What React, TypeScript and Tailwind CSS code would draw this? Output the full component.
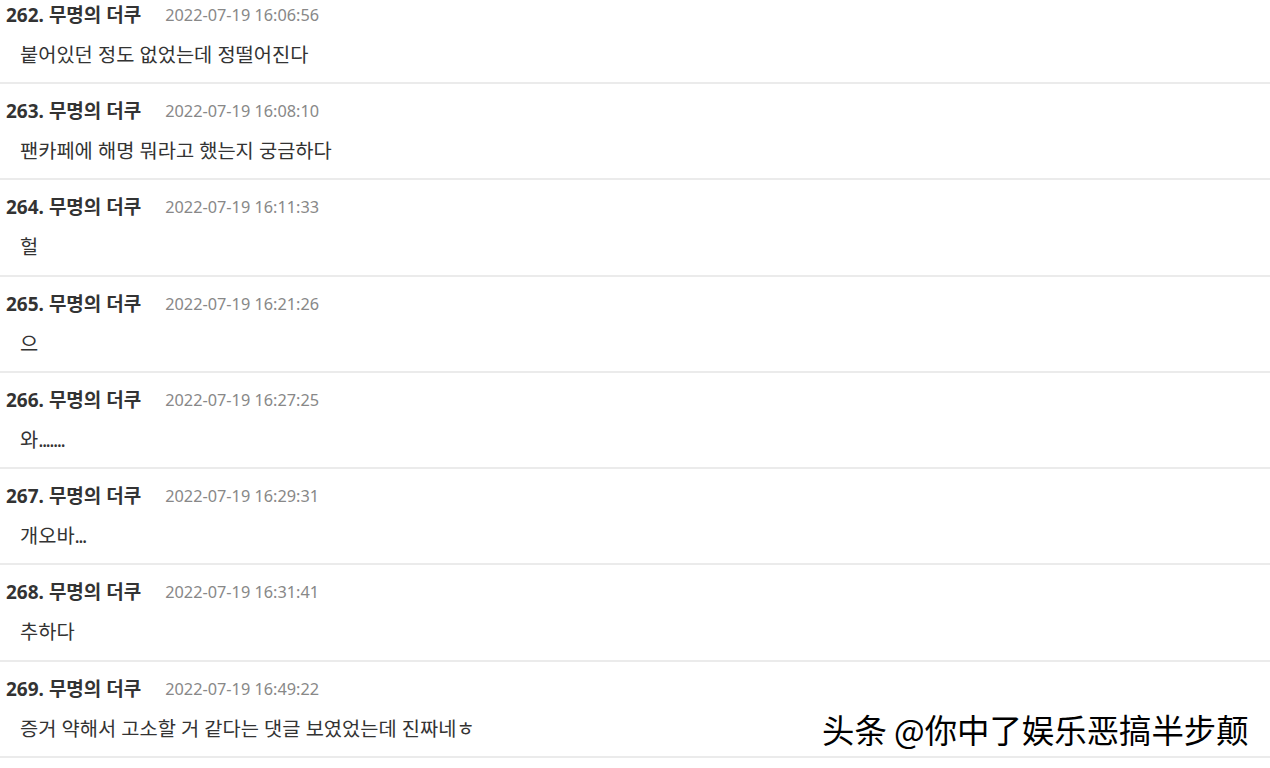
import React from "react";

const rows = [
  { n: 262, t: "2022-07-19 16:06:56", c: "붙어있던 정도 없었는데 정떨어진다", d: "" },
  { n: 263, t: "2022-07-19 16:08:10", c: "팬카페에 해명 뭐라고 했는지 궁금하다", d: "" },
  { n: 264, t: "2022-07-19 16:11:33", c: "헐", d: "" },
  { n: 265, t: "2022-07-19 16:21:26", c: "으", d: "" },
  { n: 266, t: "2022-07-19 16:27:25", c: "와", d: "......." },
  { n: 267, t: "2022-07-19 16:29:31", c: "개오바", d: "..." },
  { n: 268, t: "2022-07-19 16:31:41", c: "추하다", d: "" },
  { n: 269, t: "2022-07-19 16:49:22", c: "증거 약해서 고소할 거 같다는 댓글 보였었는데 진짜네ㅎ", d: "" },
];

export default function App() {
  return (
    <div
      className="relative w-[1270px] h-[768px] overflow-hidden bg-white"
      style={{ fontFamily: '"Noto Sans", "Noto Sans CJK KR", sans-serif' }}
    >
      <div className="-mt-[12.3px]">
        {rows.map((r) => (
          <div
            key={r.n}
            className="h-[96.3px] border-b-2 border-[#ebebeb] pt-[15px] box-border"
          >
            <div className="flex items-center h-[24px] pl-[6px]">
              <span className="text-[19px] font-bold text-[#333] leading-[24px] whitespace-nowrap">
                {r.n}. 무명의 더쿠
              </span>
              <span className="ml-[24px] text-[16.3px] text-[#888] leading-[24px] whitespace-nowrap">
                {r.t}
              </span>
            </div>
            <div className="mt-[16px] h-[24px] pl-[20px] text-[19.8px] text-[#333] leading-[24px] whitespace-nowrap">
              {r.c}
              {r.d && <span className="tracking-[-1.6px]">{r.d}</span>}
            </div>
          </div>
        ))}
      </div>
      <div
        className="absolute left-[822px] top-[708px] text-[32.4px] leading-[42px] text-black whitespace-nowrap"
        style={{
          fontFamily: '"Noto Sans CJK SC", sans-serif',
          textShadow:
            "1px 1px 0 #fff, -1px -1px 0 #fff, 1px -1px 0 #fff, -1px 1px 0 #fff",
        }}
      >
        头条 @你中了娱乐恶搞半步颠
      </div>
    </div>
  );
}
